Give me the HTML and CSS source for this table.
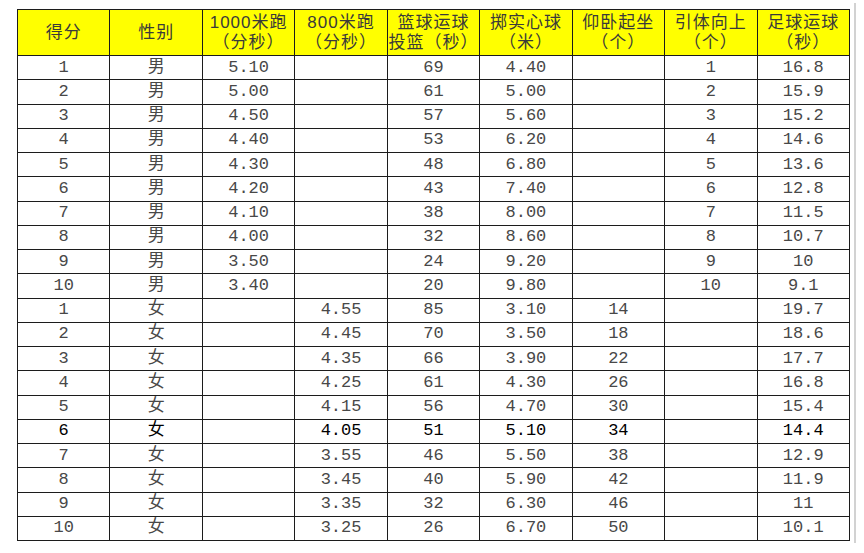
FILE: index.html
```html
<!DOCTYPE html>
<html lang="zh-CN">
<head>
<meta charset="utf-8">
<title>体育评分标准</title>
<link rel="stylesheet" href="styles.css">
</head>
<body>
<div class="sheet">
<table class="score">
<thead>
<tr class="head">
<th>得分</th><th>性别</th><th>1000米跑<br>（分秒）</th><th>800米跑<br>（分秒）</th><th>篮球运球<br>投篮（秒）</th><th>掷实心球<br>（米）</th><th>仰卧起坐<br>（个）</th><th>引体向上<br>（个）</th><th>足球运球<br>（秒）</th>
</tr>
</thead>
<tbody>
<tr><td>1</td><td>男</td><td>5.10</td><td></td><td>69</td><td>4.40</td><td></td><td>1</td><td>16.8</td></tr>
<tr><td>2</td><td>男</td><td>5.00</td><td></td><td>61</td><td>5.00</td><td></td><td>2</td><td>15.9</td></tr>
<tr><td>3</td><td>男</td><td>4.50</td><td></td><td>57</td><td>5.60</td><td></td><td>3</td><td>15.2</td></tr>
<tr><td>4</td><td>男</td><td>4.40</td><td></td><td>53</td><td>6.20</td><td></td><td>4</td><td>14.6</td></tr>
<tr><td>5</td><td>男</td><td>4.30</td><td></td><td>48</td><td>6.80</td><td></td><td>5</td><td>13.6</td></tr>
<tr><td>6</td><td>男</td><td>4.20</td><td></td><td>43</td><td>7.40</td><td></td><td>6</td><td>12.8</td></tr>
<tr><td>7</td><td>男</td><td>4.10</td><td></td><td>38</td><td>8.00</td><td></td><td>7</td><td>11.5</td></tr>
<tr><td>8</td><td>男</td><td>4.00</td><td></td><td>32</td><td>8.60</td><td></td><td>8</td><td>10.7</td></tr>
<tr><td>9</td><td>男</td><td>3.50</td><td></td><td>24</td><td>9.20</td><td></td><td>9</td><td>10</td></tr>
<tr><td>10</td><td>男</td><td>3.40</td><td></td><td>20</td><td>9.80</td><td></td><td>10</td><td>9.1</td></tr>
<tr><td>1</td><td>女</td><td></td><td>4.55</td><td>85</td><td>3.10</td><td>14</td><td></td><td>19.7</td></tr>
<tr><td>2</td><td>女</td><td></td><td>4.45</td><td>70</td><td>3.50</td><td>18</td><td></td><td>18.6</td></tr>
<tr><td>3</td><td>女</td><td></td><td>4.35</td><td>66</td><td>3.90</td><td>22</td><td></td><td>17.7</td></tr>
<tr><td>4</td><td>女</td><td></td><td>4.25</td><td>61</td><td>4.30</td><td>26</td><td></td><td>16.8</td></tr>
<tr><td>5</td><td>女</td><td></td><td>4.15</td><td>56</td><td>4.70</td><td>30</td><td></td><td>15.4</td></tr>
<tr class="strong"><td>6</td><td>女</td><td></td><td>4.05</td><td>51</td><td>5.10</td><td>34</td><td></td><td>14.4</td></tr>
<tr><td>7</td><td>女</td><td></td><td>3.55</td><td>46</td><td>5.50</td><td>38</td><td></td><td>12.9</td></tr>
<tr><td>8</td><td>女</td><td></td><td>3.45</td><td>40</td><td>5.90</td><td>42</td><td></td><td>11.9</td></tr>
<tr><td>9</td><td>女</td><td></td><td>3.35</td><td>32</td><td>6.30</td><td>46</td><td></td><td>11</td></tr>
<tr><td>10</td><td>女</td><td></td><td>3.25</td><td>26</td><td>6.70</td><td>50</td><td></td><td>10.1</td></tr>
</tbody>
</table>
</div>
</body>
</html>
```

FILE: styles.css
```css
html, body {
  margin: 0;
  padding: 0;
  background: #ffffff;
}

body {
  font-family: "Liberation Mono", "Noto Sans CJK SC", monospace;
}

.sheet {
  display: inline-block;
  margin: 3px 0 0 17px;
  padding: 6px 4px 2px 0;
  border-right: 2px solid #d2d2d2;
}

.score {
  border-collapse: collapse;
  table-layout: fixed;
  width: 833px;
}

.score th,
.score td {
  border: 1px solid #1c1c1c;
  padding: 0;
  text-align: center;
  vertical-align: middle;
  overflow: hidden;
  white-space: nowrap;
}

.head {
  height: 46px;
}

.head th {
  background: #ffff00;
  color: #3a3a3a;
  font-family: "Liberation Sans", "Noto Sans CJK SC", sans-serif;
  font-weight: normal;
  font-size: 17px;
  line-height: 20px;
  letter-spacing: 1px;
}

.score tbody tr {
  height: 24.25px;
}

.score td {
  color: #484848;
  font-size: 17px;
  line-height: 20px;
}

.score tr.strong td {
  color: #000000;
  font-weight: normal;
  -webkit-text-stroke: 0;
}
```
